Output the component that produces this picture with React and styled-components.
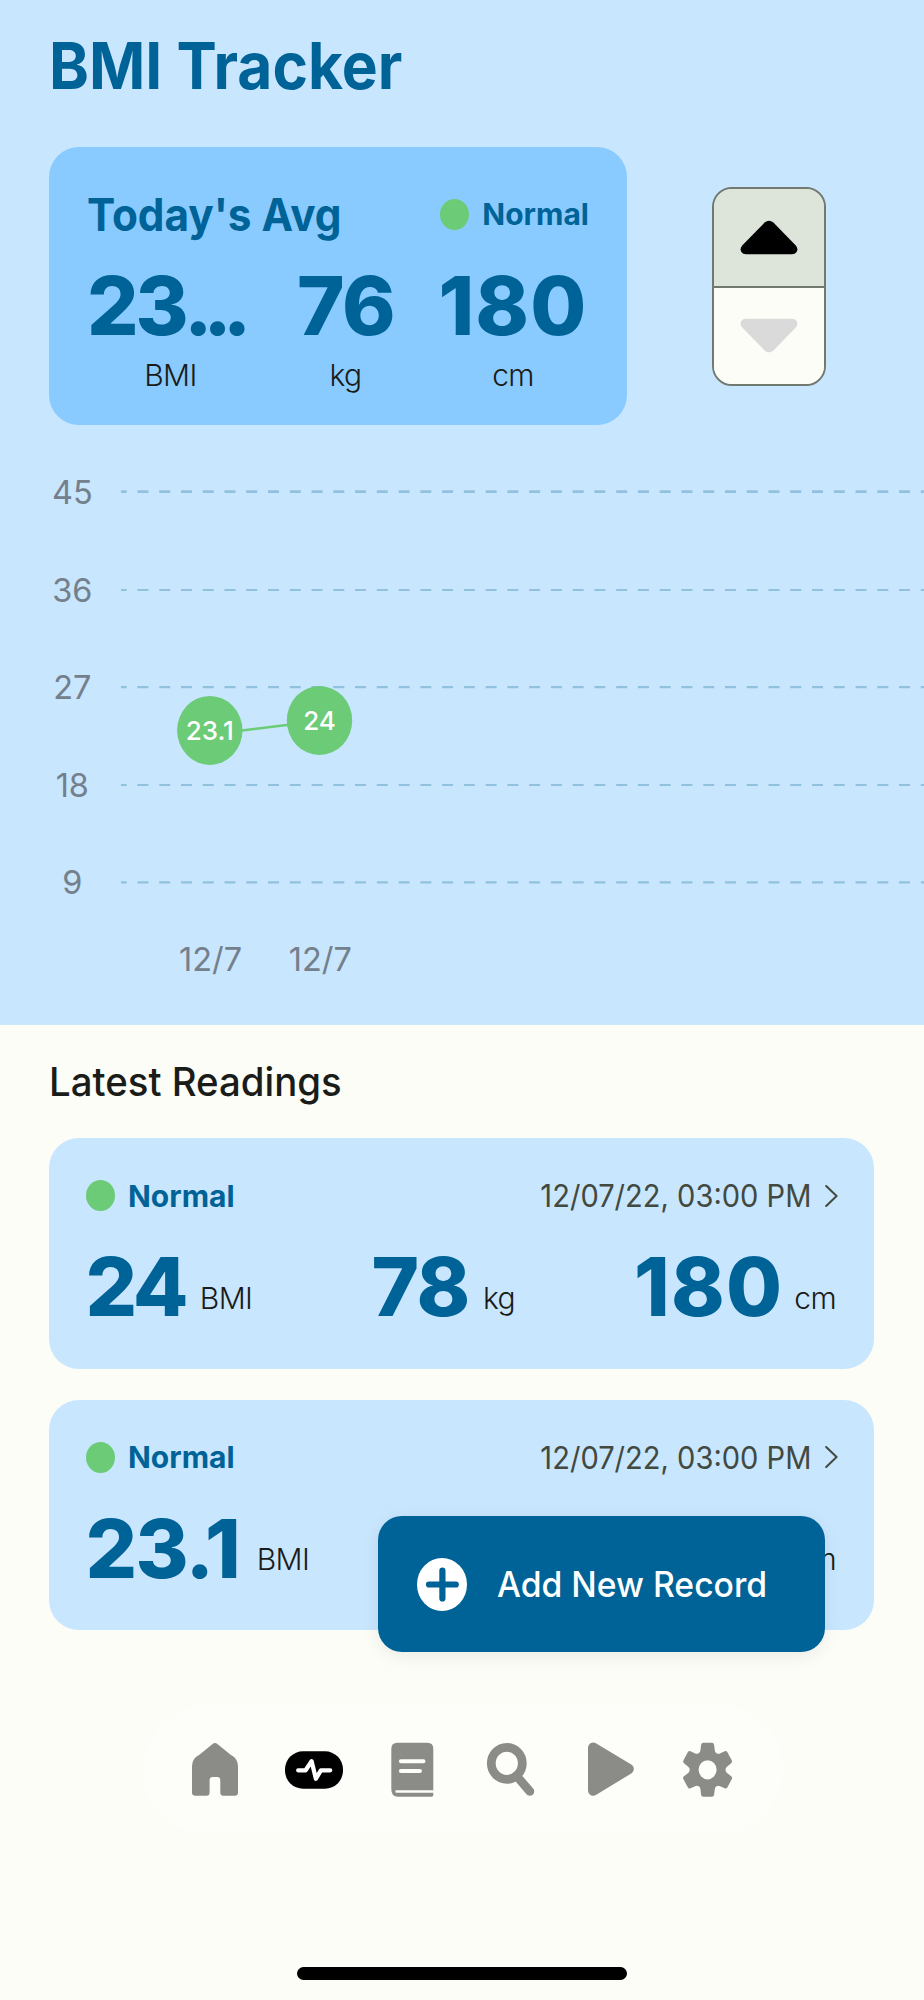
import styled, { createGlobalStyle } from 'styled-components'

const GlobalStyle = createGlobalStyle`
  * {
    box-sizing: border-box;
  }
  body {
    margin: 0;
    background: #fcfdf7;
    font-family: Inter, Roboto, sans-serif;
  }
`

const Page = styled.main`
  position: relative;
  width: 924px;
  height: 2000px;
  overflow: hidden;
  background: #fcfdf7;
`

const Overview = styled.section`
  height: 1025px;
  padding-top: 30.5px;
  background: #c9e6ff;
`

// slightly condensed text, the layout keeps its own width
const Title = styled.h1`
  margin: 0 0 46.5px 49px;
  font-size: 65px;
  line-height: 70px;
  font-weight: 700;
  transform: scaleX(0.93);
  transform-origin: left;
  color: #006397;
`

const SummaryRow = styled.div`
  display: flex;
  align-items: flex-start;
  padding-left: 49px;
`

const SummaryCard = styled.div`
  width: 578px;
  height: 278px;
  padding: 45px 38px 0;
  border-radius: 30px;
  background: #8acbff;
`

const CardHeader = styled.div`
  display: flex;
  align-items: center;
  justify-content: space-between;
  height: ${(p) => p.$height}px;
`

const CardTitle = styled.h2`
  margin: 0;
  font-size: 45px;
  font-weight: 700;
  transform: scaleX(0.94);
  transform-origin: left;
  color: #006397;
`

const Status = styled.div`
  display: flex;
  align-items: center;
  gap: 13px;
  font-size: 30px;
  font-weight: 700;
  color: #006397;
`

const Dot = styled.span`
  width: 29px;
  height: 31px;
  border-radius: 50%;
  background: #6bcb77;
`

const SummaryGrid = styled.div`
  display: grid;
  grid-template-columns: 167px 99px 152px;
  column-gap: 42px;
  margin-top: 30px;
`

const SummaryCell = styled.div`
  display: flex;
  flex-direction: column;
  align-items: ${(p) => (p.$clipped ? 'flex-start' : 'center')};
  gap: 11px;
`

const Value = styled.span`
  font-size: 81px;
  line-height: 80px;
  font-weight: 800;
  letter-spacing: ${(p) => p.$track || 0}px;
  color: #006397;
`

const Ellipsis = styled.span`
  margin-left: -1.5px;
  letter-spacing: -9.2px;
`

const Unit = styled.span`
  align-self: center;
  font-size: 30px;
  line-height: 36px;
  font-weight: 350;
  letter-spacing: -0.6px;
  color: #1a1c19;
`

const Stepper = styled.div`
  display: flex;
  flex-direction: column;
  width: 114px;
  height: 199px;
  margin: 40px 0 0 85px;
  border: 2.5px solid #72796f;
  border-radius: 20px;
  overflow: hidden;
`

const StepButton = styled.button`
  flex: 1;
  display: flex;
  align-items: center;
  justify-content: center;
  padding: 0;
  border: 0;
  background: ${(p) => (p.$active ? '#dde5db' : '#fcfdf7')};
  color: ${(p) => (p.$active ? '#000' : '#dadada')};

  & + & {
    border-top: 2px solid #72796f;
  }
`

const Chart = styled.svg`
  display: block;
  font-family: inherit;
`

const Readings = styled.section`
  padding: 33px 50px 0 49px;
`

const SectionTitle = styled.h3`
  margin: 0 0 32px;
  font-size: 39.5px;
  line-height: 48px;
  font-weight: 500;
  transform: scaleX(0.972);
  transform-origin: left;
  color: #1a1c19;
`

const ReadingList = styled.div`
  display: flex;
  flex-direction: column;
  gap: 31px;
`

const ReadingCard = styled.article`
  height: 230.5px;
  padding: 37.5px 36px 0 37px;
  border-radius: 30px;
  background: #c9e6ff;
`

const DateLink = styled.div`
  display: flex;
  align-items: center;
  gap: 14px;
  color: #42493f;
`

const DateText = styled.span`
  font-size: 30.5px;
  font-weight: 380;
  transform: scaleX(0.953);
  transform-origin: right;
`

const Measures = styled.div`
  display: flex;
  justify-content: space-between;
  margin: 31.5px 2px 0 -0.5px;
`

const Measure = styled.div`
  display: flex;
  align-items: center;
  gap: ${(p) => p.$gap}px;

  ${Unit} {
    margin-top: 21px;
  }
`

const AddButton = styled.button`
  position: absolute;
  left: 378px;
  top: 1516px;
  display: flex;
  align-items: center;
  gap: 30px;
  width: 447px;
  height: 136px;
  padding: 0 0 0 39px;
  border: 0;
  border-radius: 24px;
  background: #006397;
  box-shadow: 0 4px 18px rgba(0, 0, 0, 0.07);
  font-family: inherit;
  color: #fff;
`

const AddLabel = styled.span`
  font-size: 35px;
  font-weight: 500;
  white-space: nowrap;
  transform: scaleX(0.963);
  transform-origin: left;
`

const TabBar = styled.nav`
  display: grid;
  grid-template-columns: repeat(6, 98.6px);
  place-items: center;
  width: 640px;
  height: 130px;
  margin: 74px 0 0 143px;
  padding-left: 23px;
  border-radius: 65px;
  background: #fdfef9;
  color: #8b8c87;
`

const HomeIndicator = styled.div`
  width: 330px;
  height: 13px;
  margin: 133px auto 0;
  border-radius: 7px;
  background: #000;
`

const levels = [
  { label: 45, y: 491.7 },
  { label: 36, y: 590 },
  { label: 27, y: 687.2 },
  { label: 18, y: 785 },
  { label: 9, y: 882.3 },
]

const points = [
  { value: '23.1', date: '12/7', x: 209.8, y: 730.4 },
  { value: '24', date: '12/7', x: 319.5, y: 720.5 },
]

const readings = [
  {
    date: '12/07/22, 03:00 PM',
    measures: [
      { value: '24', unit: 'BMI', track: -3.2, gap: 14.5 },
      { value: '78', unit: 'kg', track: -1.4, gap: 14 },
      { value: '180', unit: 'cm', track: 1.2, gap: 11 },
    ],
  },
  {
    date: '12/07/22, 03:00 PM',
    measures: [
      { value: '23.1', unit: 'BMI', track: -1.6, gap: 17.5 },
      { value: '75', unit: 'kg', track: -1.4, gap: 14 },
      { value: '180', unit: 'cm', track: 1.2, gap: 11 },
    ],
  },
]

function Arrow({ down }) {
  return (
    <svg width="58" height="35" viewBox="0 0 58 35">
      <path
        d="M24.6 2.6Q29 -1.2 33.4 2.6L55.8 25.6Q58.5 28.8 56.6 32Q55 34.3 52 34.3H6Q3 34.3 1.4 32Q-.5 28.8 2.2 25.6Z"
        fill="currentColor"
        transform={down ? 'rotate(180 29 17.5)' : undefined}
      />
    </svg>
  )
}

function NormalStatus() {
  return (
    <Status>
      <Dot />
      Normal
    </Status>
  )
}

function BmiChart() {
  return (
    <Chart width="924" height="600" viewBox="0 425 924 600">
      {levels.map((l, i) => (
        <g key={l.label}>
          <text x="72.3" y={l.y + 11.9} textAnchor="middle" fontSize="32.5" fill="#74808c">
            {l.label}
          </text>
          <line
            x1="121"
            x2="924"
            y1={l.y}
            y2={l.y}
            stroke="#92c1de"
            strokeWidth={i === 0 ? 2.8 : 2.2}
            strokeDasharray="11 10.76"
            strokeDashoffset="5.3"
          />
        </g>
      ))}
      <line x1={points[0].x} y1="734.5" x2={points[1].x} y2="721" stroke="#6bcb77" strokeWidth="2.4" />
      {points.map((p) => (
        <g key={p.value} textAnchor="middle">
          <ellipse cx={p.x} cy={p.y} rx="32.7" ry="34.5" fill="#6bcb77" />
          <text x={p.x} y={p.y + 9.8} fontSize="26" fontWeight="500" fill="#fff">
            {p.value}
          </text>
          <text x={p.x + 0.8} y="971" fontSize="32.5" fill="#74808c">
            {p.date}
          </text>
        </g>
      ))}
    </Chart>
  )
}

function Reading({ date, measures }) {
  return (
    <ReadingCard>
      <CardHeader $height={40}>
        <NormalStatus />
        <DateLink>
          <DateText>{date}</DateText>
          <svg width="13" height="22" viewBox="0 0 13 22" fill="none" stroke="currentColor" strokeWidth="2">
            <path d="M1.2 1L11.6 11L1.2 21" strokeLinecap="round" strokeLinejoin="round" />
          </svg>
        </DateLink>
      </CardHeader>
      <Measures>
        {measures.map((m) => (
          <Measure key={m.unit} $gap={m.gap}>
            <Value $track={m.track}>{m.value}</Value>
            <Unit>{m.unit}</Unit>
          </Measure>
        ))}
      </Measures>
    </ReadingCard>
  )
}

function TabIcon({ children }) {
  return (
    <svg width="60" height="56" viewBox="0 0 60 56" fill="currentColor">
      {children}
    </svg>
  )
}

function Tabs() {
  return (
    <TabBar>
      <TabIcon>
        <path d="M27.6 2.9Q30 1 32.4 2.9L45.6 13.8Q53 17.5 53 25V51.5Q53 54.7 49.8 54.7H38.5Q35.3 54.7 35.3 51.5V39.5Q35.3 36 32.5 36H27.5Q24.6 36 24.6 39.5V51.5Q24.6 54.7 21.4 54.7H10.2Q7 54.7 7 51.5V25Q7 17.5 14.4 13.8Z" />
      </TabIcon>
      <TabIcon>
        <rect x="1" y="10.3" width="58" height="37.4" rx="18" fill="#000" />
        <path
          d="M14.2 29.3H21.6L27.6 20.3L31.9 37.7L36.9 29.3H46.2"
          fill="none"
          stroke="#fff"
          strokeWidth="4.3"
          strokeLinecap="round"
          strokeLinejoin="round"
        />
      </TabIcon>
      <TabIcon>
        <path d="M9.3 8Q9.3 1.8 15.3 1.8H45.5Q51.3 1.8 51.3 8V54Q51.3 55.8 49.5 55.8H16Q9.3 55.8 9.3 48Z" />
        <path d="M18.9 20.2H41.5M18.9 29.9H38" stroke="#fdfef9" strokeWidth="4" strokeLinecap="round" />
        <path d="M52 49.3H14Q12.6 49.8 13.8 51.7H52Z" fill="#fdfef9" />
      </TabIcon>
      <TabIcon>
        <g fill="none" stroke="currentColor" strokeWidth="8.8">
          <ellipse cx="25.8" cy="22.3" rx="15.5" ry="16" />
          <path d="M36.5 36L48.8 50.4" strokeLinecap="round" />
        </g>
      </TabIcon>
      <TabIcon>
        <path d="M13.2 6.8V49.5L48.6 28Z" stroke="currentColor" strokeWidth="10.4" strokeLinejoin="round" />
      </TabIcon>
      <TabIcon>
        <g transform="translate(29.6 28.8) scale(.94 1)">
          <circle r="19" />
          {[0, 60, 120, 180, 240, 300].map((a) => (
            <path
              key={a}
              transform={`rotate(${a})`}
              d="M-9.5 -16Q-8 -17.5 -7.7 -19L-6.9 -25Q-6.6 -27 -4.6 -27H4.6Q6.6 -27 6.9 -25L7.7 -19Q8 -17.5 9.5 -16Z"
            />
          ))}
          <circle r="9.6" fill="#fdfef9" />
        </g>
      </TabIcon>
    </TabBar>
  )
}

function App() {
  return (
    <Page>
      <GlobalStyle />
      <Overview>
        <Title>BMI Tracker</Title>
        <SummaryRow>
          <SummaryCard>
            <CardHeader $height={44}>
              <CardTitle>Today's Avg</CardTitle>
              <NormalStatus />
            </CardHeader>
            <SummaryGrid>
              <SummaryCell $clipped>
                <Value $track={-3.2}>
                  23<Ellipsis>...</Ellipsis>
                </Value>
                <Unit>BMI</Unit>
              </SummaryCell>
              <SummaryCell>
                <Value $track={-1.4}>76</Value>
                <Unit>kg</Unit>
              </SummaryCell>
              <SummaryCell>
                <Value $track={1.2}>180</Value>
                <Unit>cm</Unit>
              </SummaryCell>
            </SummaryGrid>
          </SummaryCard>
          <Stepper>
            <StepButton $active>
              <Arrow />
            </StepButton>
            <StepButton>
              <Arrow down />
            </StepButton>
          </Stepper>
        </SummaryRow>
        <BmiChart />
      </Overview>
      <Readings>
        <SectionTitle>Latest Readings</SectionTitle>
        <ReadingList>
          {readings.map((r, i) => (
            <Reading key={i} {...r} />
          ))}
        </ReadingList>
      </Readings>
      <Tabs />
      <HomeIndicator />
      <AddButton>
        <svg width="50" height="53" viewBox="0 0 50 53">
          <ellipse cx="25" cy="26.5" rx="25" ry="26.5" fill="#fff" />
          <path d="M12 26.5H38.8M25.4 12.6V40.4" stroke="#006397" strokeWidth="6.2" strokeLinecap="round" />
        </svg>
        <AddLabel>Add New Record</AddLabel>
      </AddButton>
    </Page>
  )
}

export default App
